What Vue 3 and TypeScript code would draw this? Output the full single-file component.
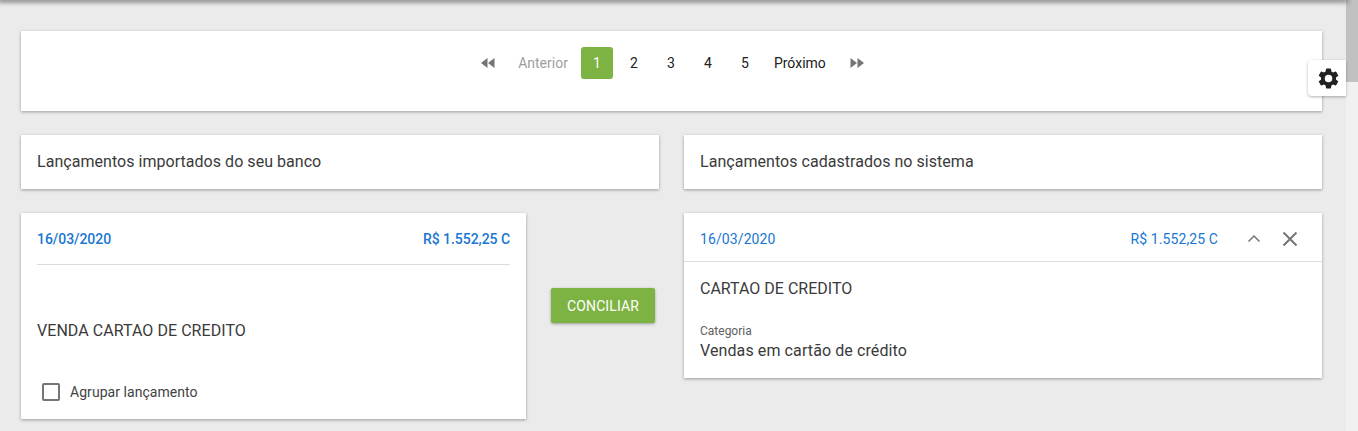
<script setup lang="ts">
const pages: number[] = [1, 2, 3, 4, 5]
</script>

<template>
  <div class="page">
    <main class="main">
      <div class="topbar"></div>
      <div class="content">
        <section class="card pager">
          <svg class="arrow first" width="14" height="10" viewBox="0 0 14 10"><path d="M0 5l6.5-5v10zM7 5l6.5-5v10z" /></svg>
          <span class="pg prev">Anterior</span>
          <span v-for="p in pages" :key="p" class="num" :class="{ active: p === 1 }">{{ p }}</span>
          <span class="pg next">Próximo</span>
          <svg class="arrow last" width="14" height="10" viewBox="0 0 14 10"><path d="M0.5 0L7 5l-6.5 5zM7.5 0L14 5l-6.5 5z" /></svg>
        </section>

        <div class="two">
          <section class="card head">Lançamentos importados do seu banco</section>
          <section class="card head">Lançamentos cadastrados no sistema</section>
        </div>

        <div class="two items">
          <div class="leftcol">
            <section class="card bank">
              <div class="bankrow">
                <span>16/03/2020</span>
                <span>R$ 1.552,25 C</span>
              </div>
              <div class="desc">VENDA CARTAO DE CREDITO</div>
              <label class="check">
                <span class="box"></span>
                <span>Agrupar lançamento</span>
              </label>
            </section>
            <div class="action"><button class="btn">CONCILIAR</button></div>
          </div>
          <section class="card sys">
            <div class="sysrow">
              <span class="date">16/03/2020</span>
              <span class="value">R$ 1.552,25 C</span>
              <svg class="up" width="14" height="9" viewBox="0 0 14 9"><path d="M1.5 7.5L7 2l5.5 5.5" /></svg>
              <svg class="close" width="16" height="16" viewBox="0 0 16 16"><path d="M1.5 1.5l13 13M14.5 1.5l-13 13" /></svg>
            </div>
            <div class="sysbody">
              <div class="desc2">CARTAO DE CREDITO</div>
              <div class="catlabel">Categoria</div>
              <div class="catvalue">Vendas em cartão de crédito</div>
            </div>
          </section>
        </div>
      </div>
      <div class="gear">
        <svg width="25" height="25" viewBox="0 0 24 24"><path fill-rule="evenodd" d="M19.14 12.94c.04-.3.06-.61.06-.94s-.02-.64-.07-.94l2.03-1.58a.5.5 0 0 0 .12-.61l-1.92-3.32a.5.5 0 0 0-.59-.22l-2.39.96a7 7 0 0 0-1.62-.94l-.36-2.54a.48.48 0 0 0-.48-.41h-3.84a.48.48 0 0 0-.47.41l-.36 2.54c-.59.24-1.13.57-1.62.94l-2.39-.96a.49.49 0 0 0-.59.22L2.74 8.87a.48.48 0 0 0 .12.61l2.03 1.58c-.05.3-.09.63-.09.94s.02.64.07.94l-2.03 1.58a.5.5 0 0 0-.12.61l1.92 3.32c.12.22.37.29.59.22l2.39-.96c.5.38 1.03.7 1.62.94l.36 2.54c.05.24.24.41.48.41h3.84c.24 0 .44-.17.47-.41l.36-2.54c.59-.24 1.13-.56 1.62-.94l2.39.96c.22.08.47 0 .59-.22l1.92-3.32a.48.48 0 0 0-.12-.61zM12 15.6A3.6 3.6 0 1 1 12 8.4a3.6 3.6 0 0 1 0 7.2z" /></svg>
      </div>
    </main>
    <aside class="scrollbar"><div class="thumb"></div></aside>
  </div>
</template>

<style>
html, body { margin: 0; height: 100%; overflow: hidden; background: #ebebeb; }
</style>

<style scoped>
.page {
  display: flex;
  width: 1358px;
  height: 431px;
  overflow: hidden;
  font-family: Roboto, "Liberation Sans", sans-serif;
  color: #424242;
  background: #ebebeb;
}
.main { position: relative; flex: 1; min-width: 0; }
.scrollbar { width: 12px; background: #f1f1f1; }
.thumb { height: 82px; background: #c1c1c1; }
.topbar {
  height: 0;
  box-shadow: 0 0 5px 2px rgba(0, 0, 0, 0.55);
}
.content {
  display: flex;
  flex-direction: column;
  gap: 24px;
  padding: 31px 24px 0 21px;
}
.card {
  background: #fff;
  box-shadow: 0 1px 3px rgba(0, 0, 0, 0.35);
}
.pager {
  display: flex;
  justify-content: center;
  align-items: flex-start;
  height: 80px;
  box-sizing: border-box;
  padding: 16px 0 0 2px;
  font-size: 14px;
  line-height: 32px;
  color: #212121;
}
.arrow { fill: #757575; margin-top: 11px; }
.first { margin-right: 16px; }
.last { margin-left: 17px; }
.pg { padding: 0 7px; }
.prev { color: #9e9e9e; margin-right: 6px; }
.next { margin-left: 1px; }
.num { width: 32px; text-align: center; margin-right: 5px; border-radius: 3px; }
.num:last-of-type { margin-right: 0; }
.num.active { background: #7cb342; color: #fff; }
.two { display: grid; grid-template-columns: 638px 638px; gap: 25px; align-items: start; }
.head {
  height: 54px;
  box-sizing: border-box;
  padding-left: 16px;
  font-size: 16px;
  font-weight: 400;
  line-height: 53px;
  letter-spacing: 0.04px;
  color: #3a3a3a;
}
.leftcol { display: flex; align-items: flex-start; }
.bank {
  width: 505px;
  height: 206px;
  box-sizing: border-box;
  padding: 0 16px;
  flex: none;
}
.bankrow {
  display: flex;
  justify-content: space-between;
  height: 51px;
  line-height: 52px;
  border-bottom: 1px solid #dcdcdc;
  font-size: 14px;
  font-weight: 500;
  letter-spacing: -0.05px;
  color: #1976d2;
}
.desc { font-size: 16px; line-height: 20px; margin-top: 56px; letter-spacing: 0.05px; color: #3a3a3a; }
.check {
  display: flex;
  align-items: center;
  gap: 10px;
  margin-top: 41px;
  padding-left: 5px;
  font-size: 14px;
  line-height: 20px;
  letter-spacing: 0.05px;
}
.box {
  width: 14px;
  height: 14px;
  border: 2px solid #757575;
  border-radius: 2px;
}
.action { flex: 1; padding: 75px 0 0 25px; }
.btn {
  display: block;
  width: 104px;
  height: 35px;
  padding: 0;
  border: 0;
  border-radius: 2px;
  background: #7cb342;
  color: #fff;
  font-family: inherit;
  font-size: 14px;
  font-weight: 400;
  letter-spacing: 0.1px;
  box-shadow: 0 1px 3px rgba(0, 0, 0, 0.35);
}
.sys { height: 165px; }
.sysrow {
  display: flex;
  align-items: center;
  box-sizing: content-box;
  height: 45px;
  padding: 3px 24px 0 16px;
  border-bottom: 1px solid #dcdcdc;
  font-size: 14px;
  letter-spacing: 0.1px;
  color: #1976d2;
}
.date { flex: 1; }
.up { fill: none; stroke: #757575; stroke-width: 1.5; margin-left: 29px; }
.close { fill: none; stroke: #757575; stroke-width: 2; margin-left: 21px; }
.sysbody { padding: 17px 16px 0; }
.desc2 { font-size: 16px; line-height: 20px; color: #3a3a3a; }
.catlabel { font-size: 12px; line-height: 16px; margin-top: 24px; color: #616161; }
.catvalue { font-size: 16px; font-weight: 400; line-height: 20px; margin-top: 2px; letter-spacing: 0.1px; color: #3a3a3a; }
.gear {
  position: absolute;
  top: 60px;
  right: 0;
  width: 38px;
  height: 36px;
  box-sizing: border-box;
  padding-left: 2px;
  display: flex;
  align-items: center;
  justify-content: center;
  background: #fff;
  border-radius: 4px 0 0 4px;
  box-shadow: 0 1px 3px rgba(0, 0, 0, 0.3);
}
.gear svg { fill: #212121; }
</style>
